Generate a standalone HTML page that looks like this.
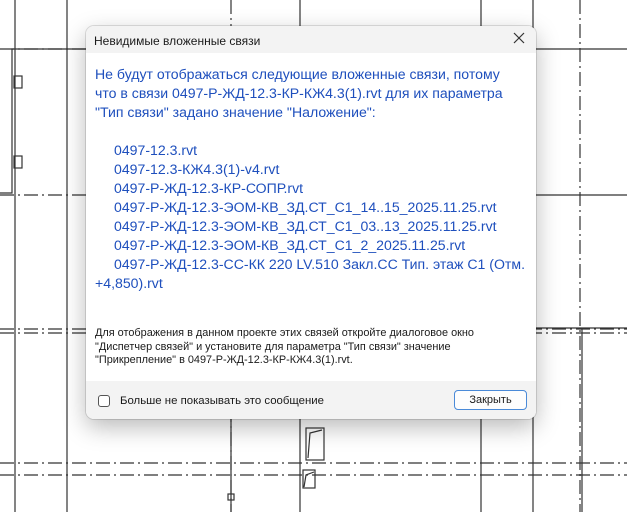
<!DOCTYPE html>
<html><head><meta charset="utf-8"><style>
*{margin:0;padding:0;box-sizing:border-box}
body{width:627px;height:512px;background:#fff;position:relative;overflow:hidden;font-family:"Liberation Sans",sans-serif}
svg.bg{position:absolute;left:0;top:0}
.dlg{position:absolute;left:86px;top:26px;width:450px;height:393px;background:#fff;border-radius:8px;box-shadow:0 8px 24px rgba(0,0,0,.28),0 0 0 1px rgba(0,0,0,.12);overflow:hidden}
.title{height:27px;background:#f3f3f3;font-size:12px;color:#1a1a1a;padding:8px 0 0 8px;position:relative}
.x{position:absolute;right:10px;top:5px;width:14px;height:14px}
.main{position:absolute;left:9px;top:39px;font-size:14.1px;line-height:19px;color:#1e4fbd;white-space:nowrap}
.main .li{padding-left:19px}
.small{position:absolute;left:9px;top:301px;font-size:10.9px;line-height:13.5px;color:#1a1a1a;white-space:nowrap}
.foot{position:absolute;left:0;top:355px;width:100%;height:38px;background:#f3f3f3}
.cb{position:absolute;left:12px;top:14px;width:12px;height:12px;border:1px solid #555;border-radius:3px;background:#fff}
.cbl{position:absolute;left:34px;top:14px;font-size:11.4px;color:#1a1a1a}
.btn{position:absolute;left:368px;top:9px;width:73px;height:20px;border:1px solid #4a8ad8;border-radius:4px;background:#fdfdfd;font-size:11px;text-align:center;line-height:18px;color:#1a1a1a}
</style></head><body>
<svg class="bg" width="627" height="512" stroke="#333" stroke-width="1.2" fill="none">
<line x1="15" y1="0" x2="15" y2="512"/>
<line x1="67" y1="0" x2="67" y2="512"/>
<line x1="231" y1="0" x2="231" y2="512" stroke-dasharray="14 4 2 4"/>
<line x1="231" y1="419" x2="231" y2="512"/>
<line x1="300" y1="0" x2="300" y2="512"/>
<line x1="481" y1="0" x2="481" y2="512"/>
<line x1="533" y1="0" x2="533" y2="512"/>
<line x1="580" y1="0" x2="580" y2="512" stroke-dasharray="14 4 2 4"/>
<line x1="0" y1="49" x2="86" y2="49" stroke-dasharray="14 4 2 4"/>
<line x1="536" y1="49" x2="627" y2="49"/>
<line x1="0" y1="195" x2="86" y2="195" stroke-dasharray="14 4 2 4"/>
<line x1="536" y1="195" x2="627" y2="195"/>
<line x1="0" y1="329" x2="627" y2="329" stroke-dasharray="14 4 2 4"/>
<line x1="0" y1="333" x2="627" y2="333" stroke-dasharray="14 4 2 4"/>
<line x1="533" y1="328" x2="627" y2="328"/>
<line x1="582" y1="328" x2="582" y2="512"/>
<line x1="0" y1="463" x2="627" y2="463" stroke-dasharray="14 4 2 4"/>
<line x1="0" y1="475" x2="627" y2="475" stroke-dasharray="14 4 2 4"/>
<polyline points="0,193 12,193 12,49 86,49"/>
<rect x="14" y="76" width="8" height="12"/>
<rect x="14" y="156" width="8" height="12"/>
<rect x="306" y="428" width="18" height="32"/>
<polyline points="308,458 310,433 322,430"/>
<rect x="303" y="470" width="12" height="18"/>
<polyline points="304,487 306,475 314,472"/>
<rect x="228" y="494" width="6" height="6"/>
</svg>
<div class="dlg">
<div class="title">Невидимые вложенные связи
<svg class="x" viewBox="0 0 14 14" stroke="#333" stroke-width="1.2"><line x1="2" y1="2" x2="12" y2="12"/><line x1="12" y1="2" x2="2" y2="12"/></svg></div>
<div class="main">Не будут отображаться следующие вложенные связи, потому<br>что в связи 0497-Р-ЖД-12.3-КР-КЖ4.3(1).rvt для их параметра<br>"Тип связи" задано значение "Наложение":<br><br>
<div class="li">0497-12.3.rvt</div>
<div class="li">0497-12.3-КЖ4.3(1)-v4.rvt</div>
<div class="li">0497-Р-ЖД-12.3-КР-СОПР.rvt</div>
<div class="li">0497-Р-ЖД-12.3-ЭОМ-КВ_ЗД.СТ_С1_14..15_2025.11.25.rvt</div>
<div class="li">0497-Р-ЖД-12.3-ЭОМ-КВ_ЗД.СТ_С1_03..13_2025.11.25.rvt</div>
<div class="li">0497-Р-ЖД-12.3-ЭОМ-КВ_ЗД.СТ_С1_2_2025.11.25.rvt</div>
<div class="li">0497-Р-ЖД-12.3-СС-КК 220 LV.510 Закл.СС Тип. этаж С1 (Отм.</div>
+4,850).rvt</div>
<div class="small">Для отображения в данном проекте этих связей откройте диалоговое окно<br>"Диспетчер связей" и установите для параметра "Тип связи" значение<br>"Прикрепление" в 0497-Р-ЖД-12.3-КР-КЖ4.3(1).rvt.</div>
<div class="foot"><div class="cb"></div><div class="cbl">Больше не показывать это сообщение</div><div class="btn">Закрыть</div></div>
</div>
</body></html>
